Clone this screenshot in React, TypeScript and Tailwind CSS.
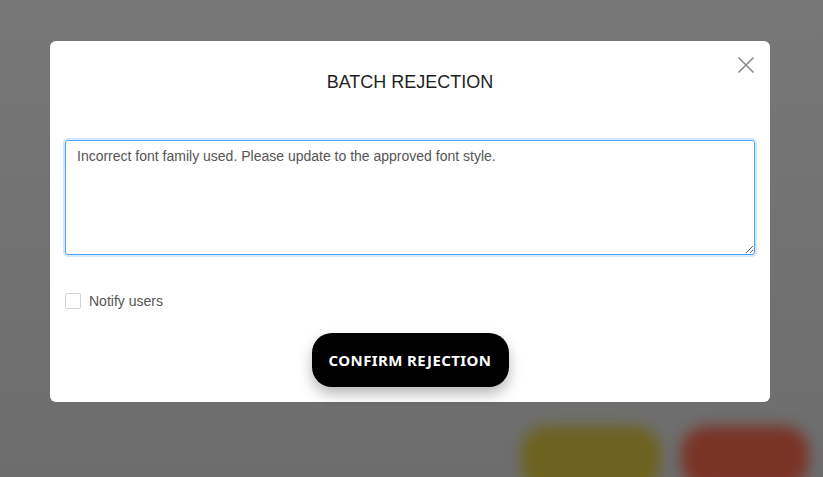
import { useState } from "react";

export default function App() {
  const [notify, setNotify] = useState(false);

  return (
    <div
      className="flex h-[477px] w-[823px] flex-col overflow-hidden bg-gradient-to-b from-[#777777] to-[#6d6d6d]"
      style={{ fontFamily: "Arial, 'Liberation Sans', sans-serif" }}
    >
      {/* Modal */}
      <div className="relative ml-[50px] mr-[53px] mt-[41px] flex h-[361px] shrink-0 flex-col rounded-[6px] bg-white px-[15px]">
        <button className="absolute right-[13px] top-[13px] p-[2px] text-[#8a8a8a]" aria-label="Close">
          <svg width="18" height="18" viewBox="0 0 18 18" fill="none" stroke="currentColor" strokeWidth="1.6">
            <path d="M1.5 1.5 L16.5 16.5 M16.5 1.5 L1.5 16.5" />
          </svg>
        </button>

        <h2 className="pt-[29px] text-center text-[18px] leading-[24px] text-[#1f1f1f]">BATCH REJECTION</h2>

        <textarea
          className="mt-[46px] h-[115px] w-full resize rounded-[3px] border border-[#4aa6f4] px-[11px] py-[7px] text-[14px] leading-[17px] text-[#555555] shadow-[0_0_0_2px_#d3e8fb] outline-none"
          defaultValue="Incorrect font family used. Please update to the approved font style."
        />

        <label className="mt-[38px] flex items-center gap-[8px] text-[14px] text-[#555555]">
          <span
            onClick={() => setNotify(!notify)}
            className="h-[16px] w-[16px] rounded-[2px] border border-[#d4d4d4] bg-white"
          />
          <span className="leading-[16px]">Notify users</span>
        </label>

        <div className="mt-[24px] flex justify-center">
          <button
            className="h-[54px] w-[197px] rounded-[20px] bg-black text-[15px] font-bold tracking-[0.4px] text-white shadow-[0_7px_14px_rgba(0,0,0,0.28)]"
            style={{ fontFamily: "'Noto Sans', sans-serif" }}
          >
            CONFIRM REJECTION
          </button>
        </div>
      </div>

      {/* Blurred page behind */}
      <div className="mt-[24px] flex shrink-0 justify-end gap-[20px] pr-[14px]">
        <div className="h-[64px] w-[140px] rounded-[26px] bg-[#6c6320] blur-[7px]" />
        <div className="h-[62px] w-[128px] rounded-[26px] bg-[#7a3426] blur-[7px]" />
      </div>
    </div>
  );
}
